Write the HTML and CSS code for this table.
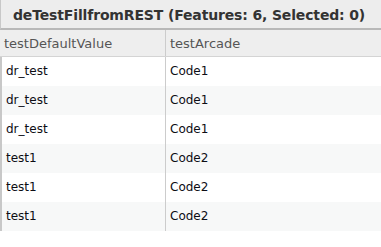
FILE: index.html
```html
<!DOCTYPE html>
<html>
<head>
<meta charset="utf-8">
<link rel="stylesheet" href="styles.css">
</head>
<body>
<div class="panel">
  <div class="title">deTestFillfromREST (Features: 6, Selected: 0)</div>
  <div class="grid">
    <div class="row head">
      <div class="cell c1">testDefaultValue</div>
      <div class="cell c2">testArcade</div>
    </div>
    <div class="body">
      <div class="row"><div class="cell c1">dr_test</div><div class="cell c2">Code1</div></div>
      <div class="row alt"><div class="cell c1">dr_test</div><div class="cell c2">Code1</div></div>
      <div class="row"><div class="cell c1">dr_test</div><div class="cell c2">Code1</div></div>
      <div class="row alt"><div class="cell c1">test1</div><div class="cell c2">Code2</div></div>
      <div class="row"><div class="cell c1">test1</div><div class="cell c2">Code2</div></div>
      <div class="row alt"><div class="cell c1">test1</div><div class="cell c2">Code2</div></div>
    </div>
  </div>
</div>
</body>
</html>
```
FILE: styles.css
```css
html, body { margin: 0; padding: 0; background: #fff; }
body { font-family: "DejaVu Sans", Verdana, sans-serif; font-size: 12px; }
.panel { width: 381px; }
.title {
  height: 30px; line-height: 31px; box-sizing: border-box;
  background: #ededed; border-left: 1px solid #c8c8c8;
  border-bottom: 2px solid #b8b8b8;
  padding-left: 12px; font-weight: bold; color: #333;
  font-size: 14px; letter-spacing: -0.15px;
}
.row { display: flex; height: 29px; }
.row.head { height: 26px; background: #eeeeee; border-bottom: 1px solid #d4d4d4; }
.body { border-left: 2px solid #c8c8c8; }
.row.alt { background: #f7f8f8; }
.cell { line-height: 29px; color: #0d0d14; white-space: nowrap; }
.head .cell { line-height: 27px; color: #555; font-size: 13px; }
.c1 { width: 164px; box-sizing: border-box; border-right: 1px solid #ccc; padding-left: 4px; }
.head .c1 { width: 166px; padding-left: 4px; }
.c2 { padding-left: 4px; }
```
